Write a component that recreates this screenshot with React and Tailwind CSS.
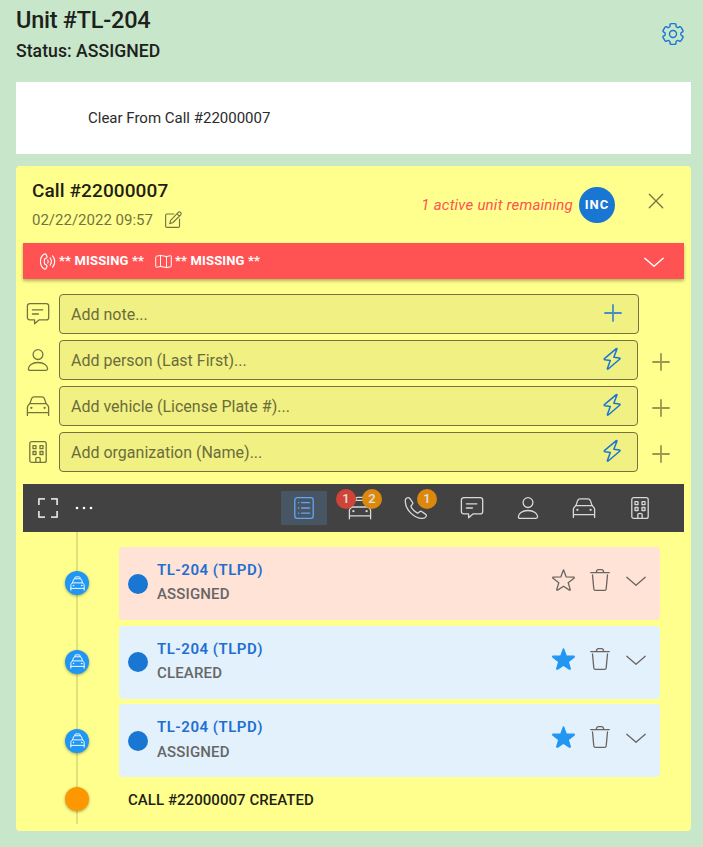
import React from "react";

function Icon({ size = 24, sw = 1.3, fill = "none", className = "", children }) {
  return (
    <svg
      width={size}
      height={size}
      viewBox="0 0 24 24"
      fill={fill}
      stroke="currentColor"
      strokeWidth={sw}
      strokeLinecap="round"
      strokeLinejoin="round"
      className={"block shrink-0 " + className}
    >
      {children}
    </svg>
  );
}

// Six-toothed cog outline with softened corners.
const cogPath = (() => {
  const pts = [];
  for (let k = 0; k < 6; k++) {
    const base = k * 60 - 90;
    for (const [r, d] of [[7.9, -22], [10.8, -16], [10.8, 16], [7.9, 22]]) {
      const a = ((base + d) * Math.PI) / 180;
      pts.push([12 + r * Math.cos(a), 12 + r * Math.sin(a)]);
    }
  }
  const mix = (a, b, t) => [a[0] + (b[0] - a[0]) * t, a[1] + (b[1] - a[1]) * t];
  const f = (p) => p.map((n) => n.toFixed(2)).join(" ");
  return (
    pts
      .map((p, i) => {
        const prev = pts[(i + pts.length - 1) % pts.length];
        const next = pts[(i + 1) % pts.length];
        return `${i ? "L" : "M"}${f(mix(p, prev, 0.3))}Q${f(p)} ${f(mix(p, next, 0.3))}`;
      })
      .join("") + "Z"
  );
})();

const CogIcon = (p) => (
  <Icon {...p}>
    <path d={cogPath} />
    <circle cx="12" cy="12" r="3.5" />
  </Icon>
);
const NoteIcon = (p) => (
  <Icon {...p}>
    <path d="M4 1.6H20.2Q22.7 1.6 22.7 4.1V15.4Q22.7 17.9 20.2 17.9H13L8.6 21.8V17.9H4Q1.4 17.9 1.4 15.4V4.1Q1.4 1.6 4 1.6Z" />
    <path d="M6.4 7.8H16.8M6.4 12H12.4" />
  </Icon>
);
const PersonIcon = (p) => (
  <Icon {...p}>
    <circle cx="12" cy="6.6" r="4.9" />
    <path d="M4 22.3Q2.4 22.3 2.4 20.8C2.4 17.6 6 14.5 12 14.5S21.6 17.6 21.6 20.8Q21.6 22.3 20 22.3Z" />
  </Icon>
);
const CarIcon = (p) => (
  <Icon {...p}>
    <path d="M3.9 9.6L5.7 4.4Q6.3 2.8 8.2 2.8H15.8Q17.7 2.8 18.3 4.4L20.1 9.6" />
    <path d="M1.4 21.4V13.5Q1.4 12.2 2.3 11.3L3.7 9.6H20.3L21.7 11.3Q22.6 12.2 22.6 13.5V21.4M1.4 18.6H22.6" />
    <circle cx="5.4" cy="13.8" r=".5" fill="currentColor" />
    <circle cx="18.6" cy="13.8" r=".5" fill="currentColor" />
  </Icon>
);
const PoliceCarIcon = (p) => (
  <Icon {...p}>
    <path d="M3.9 11L5.7 5.9Q6.3 4.4 8 4.4H16Q17.7 4.4 18.3 5.9L20.1 11" />
    <path d="M7.8 4.2V3Q7.8 1.4 9.4 1.4H14.6Q16.2 1.4 16.2 3V4.2" />
    <path d="M1.4 22.8V14.6Q1.4 13.4 2.3 12.5L3.7 11H20.3L21.7 12.5Q22.6 13.4 22.6 14.6V22.8M1.4 19.8H22.6" />
    <circle cx="5.4" cy="15.2" r=".5" fill="currentColor" />
    <circle cx="18.6" cy="15.2" r=".5" fill="currentColor" />
  </Icon>
);
const BuildingIcon = (p) => (
  <Icon {...p}>
    <rect x="3.8" y="1.6" width="16.4" height="20.8" rx="2" />
    <path d="M7 5.7h3v3h-3zM14 5.7h3v3h-3zM7 11.5h3v3h-3zM14 11.5h3v3h-3z" />
    <path d="M9.8 22.4V19Q9.8 17.3 12 17.3T14.2 19V22.4" />
  </Icon>
);
const BoltIcon = (p) => (
  <Icon {...p}>
    <path d="M16.3 1.7L4.4 11.6Q3.8 12.6 5 12.8L10.3 13.4L7.4 21.6Q7.3 22.6 8.2 22L19.9 12Q20.4 11.1 19.3 10.9L13.8 10.2L16.9 2.3Q17.1 1.3 16.3 1.7Z" />
  </Icon>
);
const PhoneIcon = (p) => (
  <Icon {...p}>
    <path d="M1.7 3Q2.8 1.6 4.1 1.6Q5.2 1.6 5.9 2.6L8.5 6.4Q9.1 7.4 8.3 8.4L7.3 9.5Q6.8 10.2 7.2 11Q9 14.7 13 16.8Q13.8 17.2 14.5 16.7L15.6 15.7Q16.6 14.9 17.6 15.5L21.4 18.1Q22.9 19.2 22.1 20.5Q21 22.4 18.4 22.4C10 22.6 1.2 13 1.3 5.6Q1.2 4 1.7 3Z" />
  </Icon>
);
const PlusIcon = (p) => (
  <Icon {...p} sw={1.8}>
    <path d="M12 4V20M4 12H20" />
  </Icon>
);
const ChevronDown = (p) => (
  <Icon {...p}>
    <path d="M2.8 8.2L12 16.2L21.2 8.2" />
  </Icon>
);
const StarIcon = (p) => (
  <Icon {...p}>
    <path d="M11.5 1.8L14.2 8.9L21.8 9.2Q22.7 9.5 22 10.2L16.2 14.7L18.3 21.6Q18.3 22.5 17.4 22.1L11.5 18.2L5.6 22.1Q4.7 22.5 4.7 21.6L6.8 14.7L1 10.2Q.3 9.5 1.2 9.2L8.8 8.9Z" />
  </Icon>
);
const TrashIcon = (p) => (
  <Icon {...p}>
    <path d="M2.7 4.6H21.3M8.2 4.4Q8.8 1.6 10.4 1.6H13.6Q15.2 1.6 15.8 4.4M4.5 7L5.8 20.9Q6 22.3 7.4 22.3H16.6Q18 22.3 18.2 20.9L19.5 7" />
  </Icon>
);
const ListIcon = (p) => (
  <Icon {...p}>
    <rect x="2.8" y="1.7" width="18.4" height="20.6" rx="2.4" />
    <path d="M9.6 6.6H17.6M9.6 12H17.6M9.6 17.2H17.6M6.4 6.6h.4M6.4 12h.4M6.4 17.2h.4" />
  </Icon>
);
const ExpandIcon = (p) => (
  <Icon {...p} sw={1.8}>
    <path strokeLinecap="butt" d="M2.9 9V2.9H9M15 2.9H21.1V9M21.1 15V21.1H15M9 21.1H2.9V15" />
  </Icon>
);
const DotsIcon = (p) => (
  <Icon {...p} fill="currentColor" sw={0}>
    <circle cx="5" cy="12" r="1.3" />
    <circle cx="12" cy="12" r="1.3" />
    <circle cx="19" cy="12" r="1.3" />
  </Icon>
);
const EditIcon = (p) => (
  <Icon {...p} sw={1.6}>
    <path d="M12.5 4.2H2.6Q.9 4.2 .9 5.9V21.4Q.9 23.1 2.6 23.1H18.8Q20.5 23.1 20.5 21.4V11.4" />
    <path d="M8 13.1L18.7 2Q20.3 .6 21.9 2T22.2 5.4L11.3 16.2L6.8 17.9ZM17 3.8L20.4 7.2" />
  </Icon>
);
const PhoneWavesIcon = (p) => (
  <Icon {...p} sw={1.6}>
    <path d="M7.6 1.4Q9.2.6 10 2.2L11.2 4.8Q11.7 6.3 10.4 7.1L8 8.4Q7 12 8 15.6L10.4 16.9Q11.7 17.7 11.2 19.2L10 21.8Q9.2 23.4 7.6 22.6C.2 18.6 .2 5.4 7.6 1.4Z" />
    <path d="M12.3 9.8Q13.7 12 12.3 14.2M15.6 7Q19.4 12 15.6 17M19.2 4Q25.2 12 19.2 20" />
  </Icon>
);
const MapIcon = (p) => (
  <Icon {...p} sw={1.4}>
    <path d="M1 5.8Q1 4.8 2 4.5L7.8 3.4L16.2 5L21.8 3.8Q23 3.6 23 4.8V18.3Q23 19.2 22 19.5L16.2 20.6L7.8 19L2.2 20.2Q1 20.4 1 19.2ZM7.8 3.4V19M16.2 5V20.6" />
  </Icon>
);
const CloseIcon = (p) => (
  <Icon {...p}>
    <path d="M5.3 5.3L18.7 18.7M18.7 5.3L5.3 18.7" />
  </Icon>
);

function InputRow({ icon, label, first }) {
  return (
    <div className="flex h-10 items-center">
      <div className="mr-[9px] text-[#737343]">{icon}</div>
      <div
        className={
          "flex h-10 items-center justify-between rounded border border-[#737343] bg-[#f0f083] pr-[13px] pl-[11px] " +
          (first ? "w-[580px]" : "w-[579px]")
        }
      >
        <span className="pt-[2px] text-base text-[#6c6c3b]">{label}</span>
        <span className="mb-[2px]">
          {first ? <PlusIcon className="text-[#4490c4]" /> : <BoltIcon sw={1.5} className="text-[#1976d2]" />}
        </span>
      </div>
      {!first && <PlusIcon className="mt-1 ml-[11px] text-[#999952]" />}
    </div>
  );
}

function Badge({ color, pos, children }) {
  return (
    <span
      className={`absolute top-[-2px] flex size-5 items-center justify-center rounded-full text-[13px] font-medium text-[#e0e0e0] ${color} ${pos}`}
    >
      {children}
    </span>
  );
}

function Tab({ active, children }) {
  return (
    <div
      className={
        "relative flex h-[34px] w-[46px] items-center justify-center pr-px " +
        (active ? "bg-[#485563] text-[#64a5f6]" : "text-[#d9d9d9]")
      }
    >
      {children}
    </div>
  );
}

function Entry({ status, starred, bg, tweak }) {
  return (
    <div className={"flex items-start " + tweak}>
      <div className="relative mt-[24.2px] flex size-6 items-center justify-center rounded-full bg-[#2196f3] text-white shadow-[0_1px_3px_rgba(0,0,0,0.35)]">
        <PoliceCarIcon size={15} sw={1.5} />
      </div>
      <div className={"ml-[30px] flex h-[73px] w-[541px] rounded pl-[9px] " + bg}>
        <div className="mt-[26.5px] size-5 rounded-full bg-[#1976d2]" />
        <div className="ml-[9px] mt-[11px] flex-1">
          <div className="text-[15px] leading-6 font-semibold tracking-[0.5px] text-[#1f6fd0]">TL-204 (TLPD)</div>
          <div className="pt-[0.2px] text-[15px] leading-6 font-medium tracking-[0.15px] text-[#666666]">{status}</div>
        </div>
        <div className="mt-[21px] mr-3 flex gap-3 text-[#6b6461]">
          {starred ? <StarIcon fill="currentColor" className="text-[#2196f3]" /> : <StarIcon />}
          <TrashIcon />
          <ChevronDown className="mt-px" />
        </div>
      </div>
    </div>
  );
}

export default function App() {
  return (
    <div className="h-[847px] w-[703px] bg-[#c8e6c9] px-4 pr-3 font-['Roboto',sans-serif] text-[#1c211c]">
      <header className="flex h-[82px] justify-between">
        <div className="pt-1">
          <h1 className="text-[23.5px] leading-8 font-medium tracking-[-0.25px]">Unit #TL-204</h1>
          <p className="pt-px text-[17.6px] leading-7 font-medium tracking-[0.05px]">Status: ASSIGNED</p>
        </div>
        <CogIcon sw={1.4} className="mt-[22px] mr-[6px] text-[#1976d2]" />
      </header>

      <div className="flex h-[72px] w-[675px] items-center bg-white pl-[72px] text-[15px] text-[#2b2b2b]">
        Clear From Call #22000007
      </div>

      <main className="mt-3 h-[665px] w-[675px] rounded bg-[#ffff8d] px-[7px]">
        <div className="flex h-[77px] pl-[9px]">
          <div className="pt-[11px]">
            <h2 className="text-[19px] leading-7 font-medium tracking-[0.1px] text-[#1f1f14]">Call #22000007</h2>
            <div className="flex h-[30px] items-center gap-3 text-[#737343]">
              <span className="text-[15px]">02/22/2022 09:57</span>
              <EditIcon size={17} className="mb-px" />
            </div>
          </div>
          <div className="ml-auto flex pt-[21px]">
            <span className="mt-[6px] mr-[6px] text-[15px] leading-6 tracking-[0.22px] text-[#ff5252] italic">
              1 active unit remaining
            </span>
            <span className="flex size-9 items-center justify-center rounded-full bg-[#1976d2] text-[13px] font-bold tracking-[1px] text-white">
              INC
            </span>
            <CloseIcon className="mt-[2px] mr-4 ml-[29px] text-[#737343]" />
          </div>
        </div>

        <div className="flex h-9 w-[661px] items-center bg-[#ff5252] pr-[18px] pl-4 text-[13px] font-bold tracking-[0.15px] text-white shadow-[0_2px_3px_rgba(0,0,0,0.3)]">
          <PhoneWavesIcon size={17} className="mr-[3px]" />
          <span>** MISSING **</span>
          <MapIcon size={17} className="mr-[3px] ml-[11px]" />
          <span>** MISSING **</span>
          <ChevronDown sw={1.5} className="mt-px ml-auto" />
        </div>

        <div className="flex flex-col gap-[6px] pt-[15px] pl-[3px]">
          <InputRow first icon={<NoteIcon />} label="Add note..." />
          <InputRow icon={<PersonIcon />} label="Add person (Last First)..." />
          <InputRow icon={<CarIcon />} label="Add vehicle (License Plate #)..." />
          <InputRow icon={<BuildingIcon />} label="Add organization (Name)..." />
        </div>

        <div className="mt-3 flex h-12 w-[661px] items-center bg-[#424242] pr-[21px] pl-[13px]">
          <ExpandIcon className="text-[#d9d9d9]" />
          <DotsIcon className="ml-3 text-white" />
          <div className="ml-auto flex gap-[10px]">
            <Tab active><ListIcon /></Tab>
            <Tab>
              <PoliceCarIcon />
              <Badge color="bg-[#d04437]" pos="left-[-1px]">1</Badge>
              <Badge color="bg-[#dc880c]" pos="left-[25px]">2</Badge>
            </Tab>
            <Tab>
              <PhoneIcon />
              <Badge color="bg-[#dc880c]" pos="left-[24px]">1</Badge>
            </Tab>
            <Tab><NoteIcon /></Tab>
            <Tab><PersonIcon /></Tab>
            <Tab><CarIcon /></Tab>
            <Tab><BuildingIcon /></Tab>
          </div>
        </div>

        <div className="relative h-[292px] pt-[15px] pl-[42px]">
          <div className="absolute top-0 left-[53px] h-full w-[2px] bg-[#e0e07c]" />
          <Entry status="ASSIGNED" bg="bg-[#ffe3d6]" tweak="h-[78.6px]" />
          <Entry status="CLEARED" starred bg="bg-[#e3f1fd]" tweak="h-[78.8px]" />
          <Entry status="ASSIGNED" starred bg="bg-[#e3f1fd]" tweak="h-[82.6px]" />
          <div className="relative flex h-6 items-center">
            <span className="size-6 rounded-full bg-[#ff9800] shadow-[0_1px_3px_rgba(0,0,0,0.35)]" />
            <span className="ml-[39px] pt-[2px] text-[15px] font-medium tracking-[0.05px] text-[#1f1f14]">
              CALL #22000007 CREATED
            </span>
          </div>
        </div>
      </main>
    </div>
  );
}
